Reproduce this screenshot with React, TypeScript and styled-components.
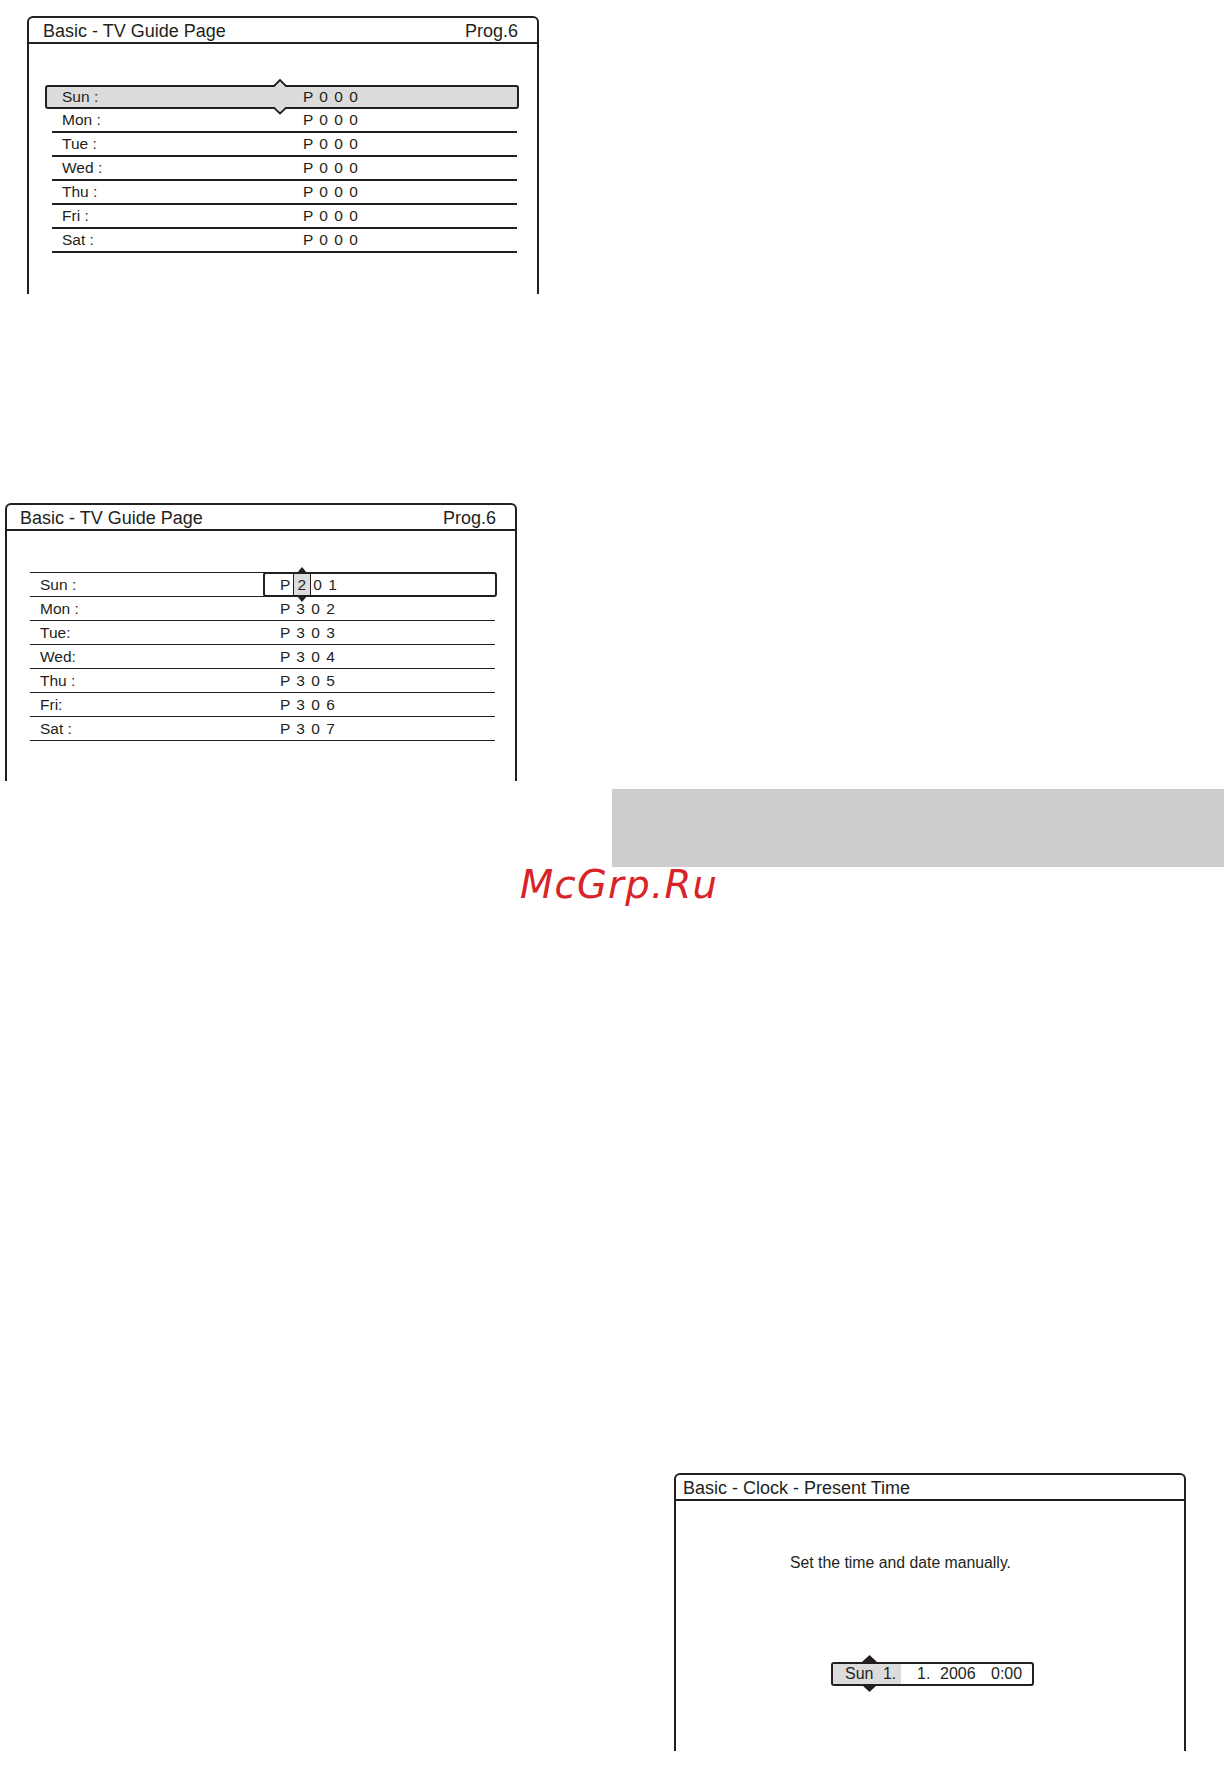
import React from "react";
import styled, { createGlobalStyle } from "styled-components";

const INK = "#231f20";
const HILITE = "#dcdcdd";

const GlobalStyle = createGlobalStyle`
  html, body { margin: 0; padding: 0; background: #ffffff; }
  body { font-family: "Liberation Sans", Arial, sans-serif; color: ${INK}; }
  * { box-sizing: border-box; }
`;

const Page = styled.div`
  position: relative;
  width: 1224px;
  height: 1769px;
  overflow: hidden;
  padding-top: 16px;
  background: #ffffff;
`;

const Panel = styled.section<{ $left: number; $top: number }>`
  width: 512px;
  height: 278px;
  margin-left: ${(p) => p.$left}px;
  margin-top: ${(p) => p.$top}px;
  border: 2px solid ${INK};
  border-bottom: none;
  border-radius: 6px 6px 0 0;
  display: flex;
  flex-direction: column;
`;

const TitleBar = styled.header<{ $padLeft: number }>`
  height: 26px;
  flex: none;
  border-bottom: 2px solid ${INK};
  display: flex;
  justify-content: space-between;
  align-items: flex-start;
  padding: 0 19px 0 ${(p) => p.$padLeft}px;
  font-size: 18px;
  line-height: 26px;
  white-space: nowrap;
`;

const Body = styled.div<{ $padTop: number }>`
  padding-top: ${(p) => p.$padTop}px;
  display: flex;
  flex-direction: column;
`;

/* ---------- Panel 1 rows ---------- */

const SelectedRow = styled.div`
  position: relative;
  height: 24px;
  margin: 0 18px 0 16px;
  padding-left: 15px;
  border: 2px solid ${INK};
  border-radius: 3px;
  background: ${HILITE};
  display: grid;
  grid-template-columns: 241px 1fr;
  font-size: 15.5px;
  line-height: 20px;
`;

const ThickRow = styled.div`
  height: 24px;
  margin: 0 20px 0 23px;
  padding-left: 10px;
  border-bottom: 2px solid ${INK};
  display: grid;
  grid-template-columns: 241px 1fr;
  font-size: 15.5px;
  line-height: 22px;
`;

const Label = styled.span`
  white-space: nowrap;
`;

const Digits = styled.span`
  letter-spacing: 1px;
  white-space: pre;
`;

const Chevron = styled.svg<{ $down?: boolean }>`
  position: absolute;
  left: 227px;
  width: 12px;
  height: 8px;
  overflow: visible;
  ${(p) => (p.$down ? "bottom: -8px;" : "top: -8px;")}
`;

/* ---------- Panel 2 rows ---------- */

const ThinList = styled.div`
  margin: 0 20px 0 23px;
  border-top: 1px solid ${INK};
`;

const ThinRow = styled.div`
  height: 24px;
  padding-left: 10px;
  border-bottom: 1px solid ${INK};
  display: grid;
  grid-template-columns: 223px 1fr;
  font-size: 15.5px;
  line-height: 23px;
`;

const PlainValue = styled.span`
  padding-left: 17px;
  letter-spacing: 1px;
  white-space: pre;
`;

const ValueBox = styled.span`
  display: flex;
  align-items: stretch;
  margin: -1px -2px -1px 0;
  padding-left: 15px;
  border: 2px solid ${INK};
  border-radius: 3px;
  background: #ffffff;
  letter-spacing: 1px;
  line-height: 21px;
  white-space: pre;
`;

const DigitCell = styled.span`
  position: relative;
  margin: 0 -3px;
  padding: 0 3px;
  background: ${HILITE};
  border-left: 1px solid ${INK};
  border-right: 1px solid ${INK};
`;

const Triangle = styled.svg<{ $down?: boolean; $w: number; $h: number; $off: number }>`
  position: absolute;
  left: 50%;
  width: ${(p) => p.$w}px;
  height: ${(p) => p.$h}px;
  margin-left: ${(p) => -p.$w / 2}px;
  ${(p) => (p.$down ? `bottom: ${-p.$off}px;` : `top: ${-p.$off}px;`)}
`;

/* ---------- Gray bar + watermark ---------- */

const GrayBar = styled.div`
  width: 612px;
  height: 78px;
  margin: 8px 0 0 612px;
  background: #cccccc;
`;

const Watermark = styled.div`
  margin: 2px 0 0 520px;
  font-family: "DejaVu Sans", Verdana, sans-serif;
  font-style: italic;
  font-size: 38.5px;
  line-height: 32px;
  letter-spacing: 1.3px;
  color: #d8232a;
  white-space: nowrap;
`;

/* ---------- Panel 3 ---------- */

const Message = styled.p`
  margin: 0 0 0 114px;
  font-size: 15.8px;
  line-height: 20px;
  white-space: nowrap;
`;

const DateBox = styled.div`
  display: flex;
  width: 203px;
  height: 24px;
  margin: 89px 0 0 155px;
  border: 2px solid ${INK};
  border-radius: 3px;
  font-size: 16px;
  line-height: 20px;
  white-space: nowrap;
`;

const DateSelected = styled.span`
  position: relative;
  width: 68px;
  padding-left: 12px;
  background: ${HILITE};
`;

const DatePart = styled.span<{ $gap: number }>`
  margin-left: ${(p) => p.$gap}px;
`;

const DateCaret = styled.svg<{ $down?: boolean }>`
  position: absolute;
  left: 29px;
  width: 15px;
  height: 7px;
  ${(p) => (p.$down ? "bottom: -8px;" : "top: -9px;")}
`;

/* ---------- Data ---------- */

const days1 = ["Sun :", "Mon :", "Tue :", "Wed :", "Thu :", "Fri :", "Sat :"];
const days2 = ["Sun :", "Mon :", "Tue:", "Wed:", "Thu :", "Fri:", "Sat :"];
const values2 = ["P 2 0 1", "P 3 0 2", "P 3 0 3", "P 3 0 4", "P 3 0 5", "P 3 0 6", "P 3 0 7"];

function UpTri({ w, h, off }: { w: number; h: number; off: number }) {
  return (
    <Triangle $w={w} $h={h} $off={off} viewBox={`0 0 ${w} ${h}`}>
      <polygon points={`0,${h} ${w / 2},0 ${w},${h}`} fill={INK} />
    </Triangle>
  );
}

function DownTri({ w, h, off }: { w: number; h: number; off: number }) {
  return (
    <Triangle $down $w={w} $h={h} $off={off} viewBox={`0 0 ${w} ${h}`}>
      <polygon points={`0,0 ${w / 2},${h} ${w},0`} fill={INK} />
    </Triangle>
  );
}

export default function App() {
  return (
    <>
      <GlobalStyle />
      <Page>
        {/* Panel 1 */}
        <Panel $left={27} $top={0}>
          <TitleBar $padLeft={14}>
            <span>Basic - TV Guide Page</span>
            <span>Prog.6</span>
          </TitleBar>
          <Body $padTop={41}>
            <SelectedRow>
              <Chevron viewBox="0 0 12 8">
                <polygon points="0,8.6 6,1 12,8.6" fill={HILITE} />
                <polyline points="0,7 6,1 12,7" fill="none" stroke={INK} strokeWidth="1.8" />
              </Chevron>
              <Label>{days1[0]}</Label>
              <Digits>P 0 0 0</Digits>
              <Chevron $down viewBox="0 0 12 8">
                <polygon points="0,-0.6 6,6 12,-0.6" fill={HILITE} />
                <polyline points="0,0.8 6,6.4 12,0.8" fill="none" stroke={INK} strokeWidth="1.8" />
              </Chevron>
            </SelectedRow>
            {days1.slice(1).map((d) => (
              <ThickRow key={d}>
                <Label>{d}</Label>
                <Digits>P 0 0 0</Digits>
              </ThickRow>
            ))}
          </Body>
        </Panel>

        {/* Panel 2 */}
        <Panel $left={5} $top={209}>
          <TitleBar $padLeft={13}>
            <span>Basic - TV Guide Page</span>
            <span>Prog.6</span>
          </TitleBar>
          <Body $padTop={41}>
            <ThinList>
              {days2.map((d, i) => (
                <ThinRow key={d}>
                  <Label>{d}</Label>
                  {i === 0 ? (
                    <ValueBox>
                      {"P "}
                      <DigitCell>
                        <UpTri w={10} h={6} off={7} />
                        2
                        <DownTri w={10} h={6} off={7} />
                      </DigitCell>
                      {" 0 1"}
                    </ValueBox>
                  ) : (
                    <PlainValue>{values2[i]}</PlainValue>
                  )}
                </ThinRow>
              ))}
            </ThinList>
          </Body>
        </Panel>

        <GrayBar />
        <Watermark>McGrp.Ru</Watermark>

        {/* Panel 3 */}
        <Panel $left={674} $top={572}>
          <TitleBar $padLeft={7}>
            <span>Basic - Clock - Present Time</span>
          </TitleBar>
          <Body $padTop={52}>
            <Message>Set the time and date manually.</Message>
            <DateBox>
              <DateSelected>
                <DateCaret viewBox="0 0 15 7">
                  <polygon points="0,7 7.5,0 15,7" fill={INK} />
                </DateCaret>
                Sun
                <DatePart $gap={9.5}>1.</DatePart>
                <DateCaret $down viewBox="0 0 15 7">
                  <polygon points="0,0 7.5,7 15,0" fill={INK} />
                </DateCaret>
              </DateSelected>
              <DatePart $gap={16}>1.</DatePart>
              <DatePart $gap={9.7}>2006</DatePart>
              <DatePart $gap={15.4}>0:00</DatePart>
            </DateBox>
          </Body>
        </Panel>
      </Page>
    </>
  );
}
